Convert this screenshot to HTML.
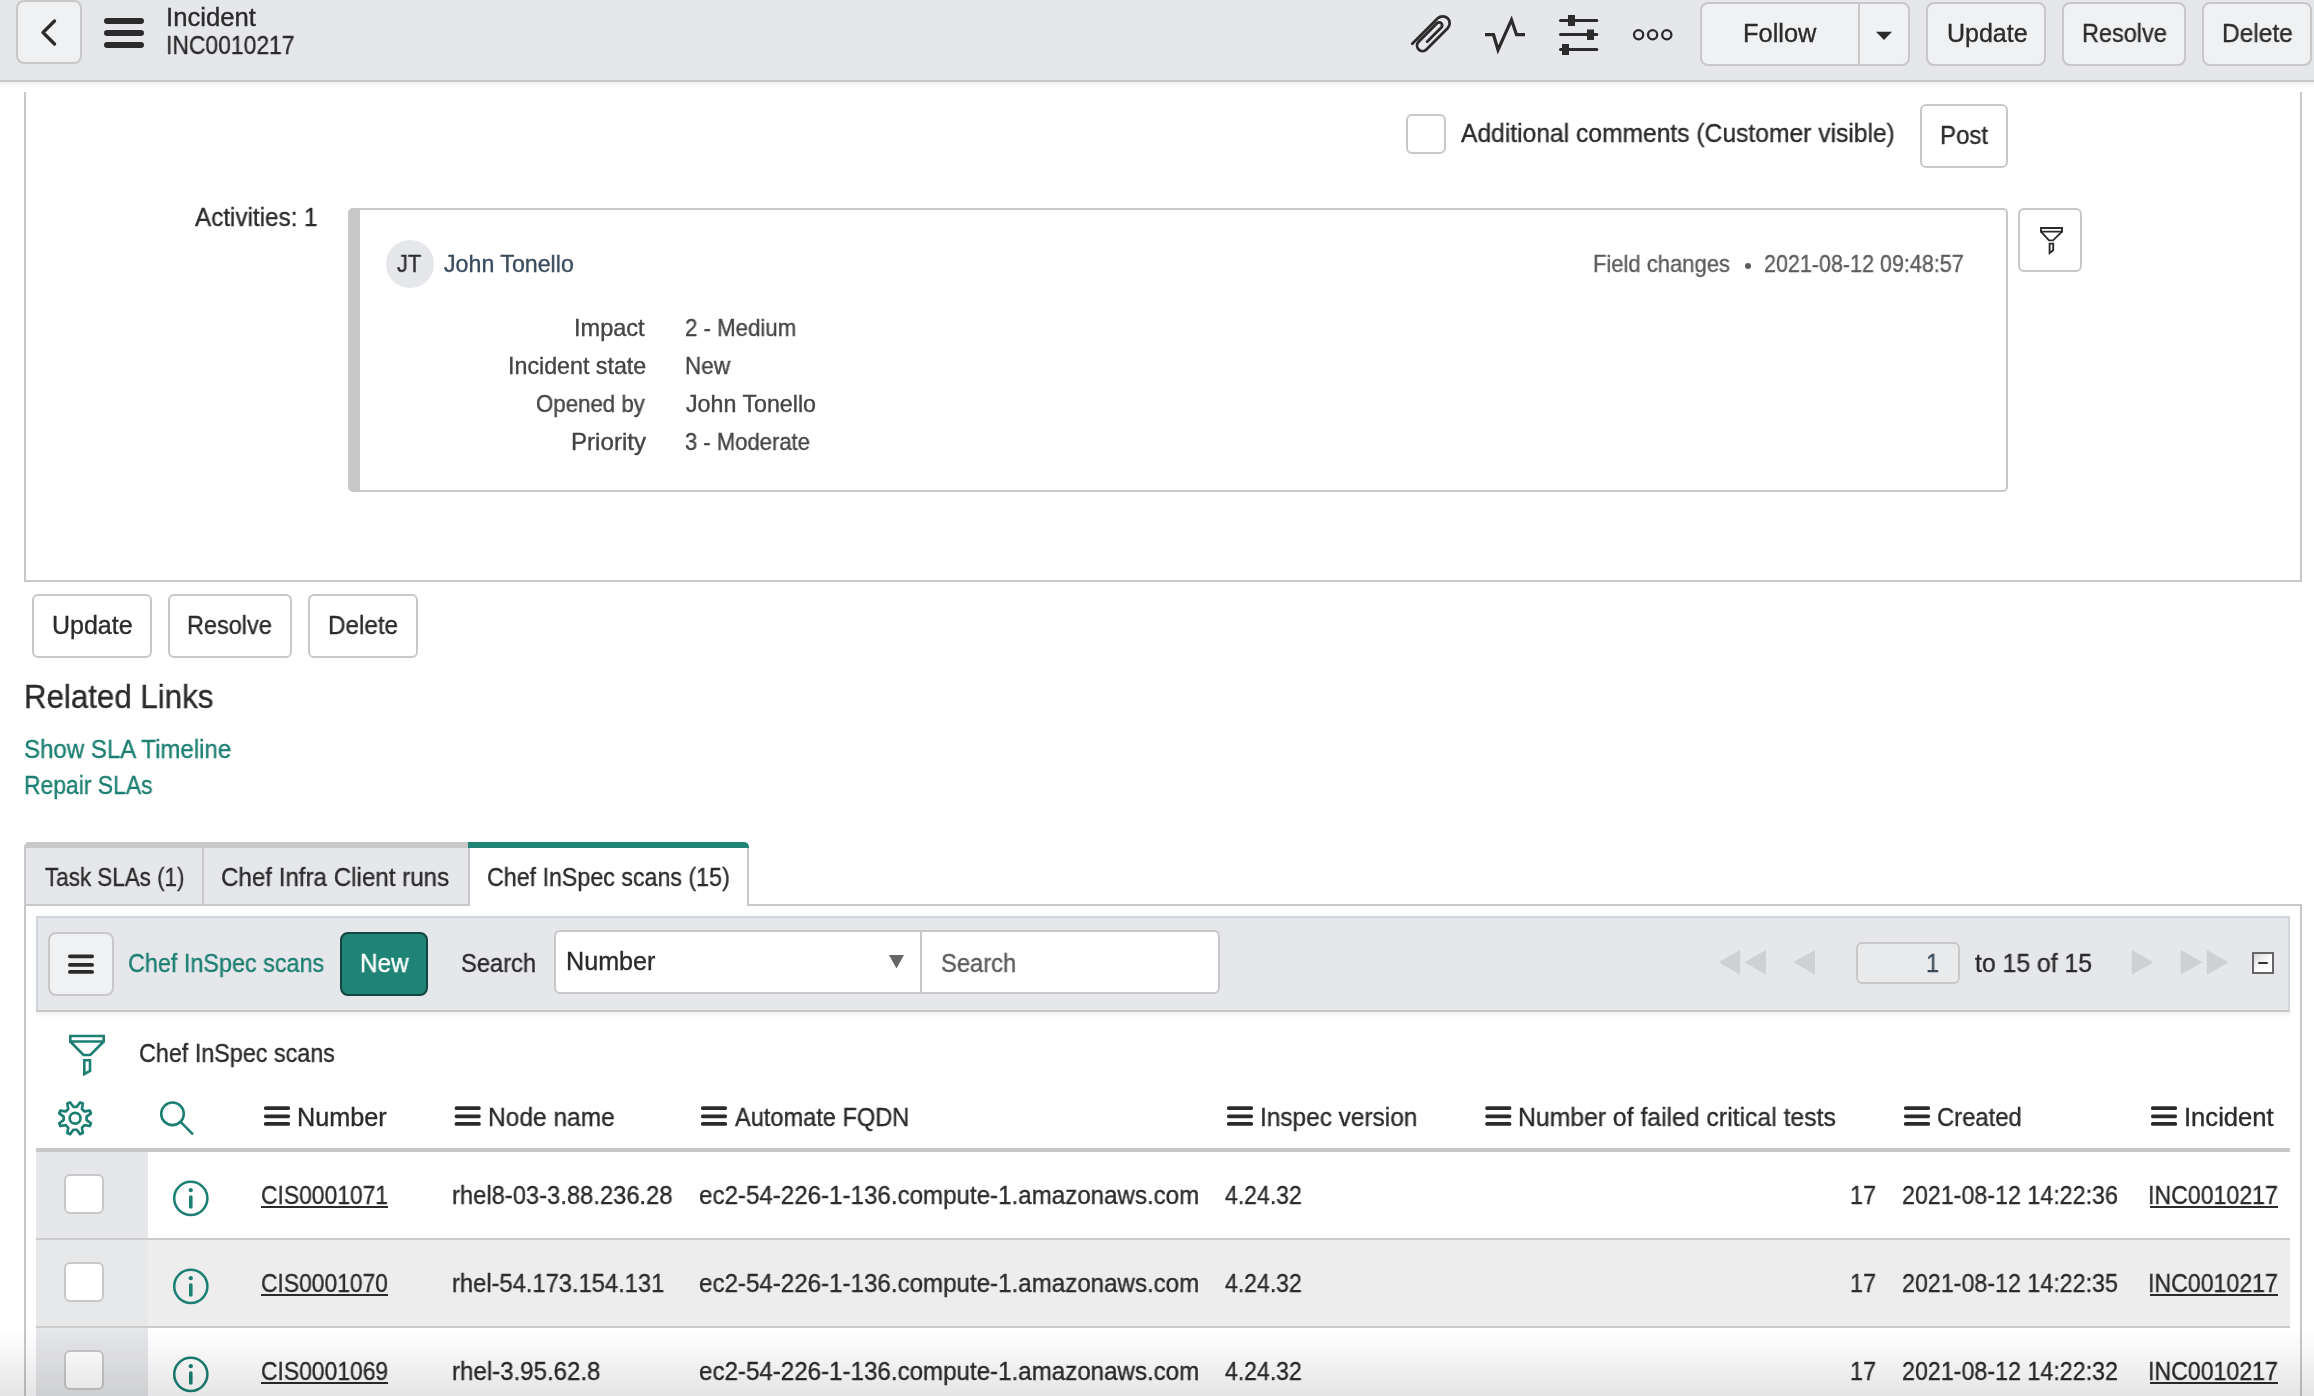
<!DOCTYPE html>
<html><head><meta charset="utf-8"><title>Incident INC0010217</title>
<style>
html,body{margin:0;padding:0;width:2314px;height:1396px;overflow:hidden;background:#fff;position:relative}
body div{position:absolute}
.t{font-family:"Liberation Sans",sans-serif;line-height:0;white-space:nowrap;transform-origin:0 0;will-change:transform;-webkit-text-stroke:0.35px currentColor}
svg{position:absolute;left:0;top:0}
</style></head><body>
<div style="left:0px;top:0px;width:2314px;height:80px;background:#e6e7ea"></div>
<div style="left:0px;top:80px;width:2314px;height:2px;background:#c8c8c8"></div>
<div style="left:0px;top:82px;width:2314px;height:7px;background:linear-gradient(rgba(0,0,0,0.06),rgba(0,0,0,0))"></div>
<div style="left:16px;top:0px;width:66px;height:64px;box-sizing:border-box;border:2px solid #c8c8c8;border-radius:8px;background:#f0f1f3"></div>
<div style="left:1700px;top:2px;width:210px;height:64px;box-sizing:border-box;border:2px solid #c8c8c8;border-radius:8px;background:#f0f1f3"></div>
<div style="left:1858px;top:4px;width:2px;height:60px;background:#c8c8c8"></div>
<div style="left:1926px;top:2px;width:120px;height:64px;box-sizing:border-box;border:2px solid #c8c8c8;border-radius:8px;background:#f0f1f3"></div>
<div style="left:2062px;top:2px;width:124px;height:64px;box-sizing:border-box;border:2px solid #c8c8c8;border-radius:8px;background:#f0f1f3"></div>
<div style="left:2202px;top:2px;width:110px;height:64px;box-sizing:border-box;border:2px solid #c8c8c8;border-radius:8px;background:#f0f1f3"></div>
<div style="left:24px;top:92px;width:2278px;height:490px;box-sizing:border-box;border:2px solid #c8c8c8;border-top:none"></div>
<div style="left:1406px;top:114px;width:40px;height:40px;box-sizing:border-box;border:2px solid #c8c8c8;border-radius:6px;background:#fff"></div>
<div style="left:1920px;top:104px;width:88px;height:64px;box-sizing:border-box;border:2px solid #c8c8c8;border-radius:6px;background:#fff"></div>
<div style="left:348px;top:208px;width:1660px;height:284px;box-sizing:border-box;border:2px solid #c8c8c8;border-left:12px solid #c8c8c8;border-radius:5px;background:#fff"></div>
<div style="left:386px;top:240px;width:48px;height:48px;border-radius:50%;background:#e6e7ea"></div>
<div style="left:1744.7px;top:262.6px;width:6px;height:6px;border-radius:50%;background:#5c5c5c"></div>
<div style="left:2018px;top:208px;width:64px;height:64px;box-sizing:border-box;border:2px solid #c8c8c8;border-radius:6px;background:#fff"></div>
<div style="left:32px;top:594px;width:120px;height:64px;box-sizing:border-box;border:2px solid #c8c8c8;border-radius:6px;background:#fff"></div>
<div style="left:168px;top:594px;width:124px;height:64px;box-sizing:border-box;border:2px solid #c8c8c8;border-radius:6px;background:#fff"></div>
<div style="left:308px;top:594px;width:110px;height:64px;box-sizing:border-box;border:2px solid #c8c8c8;border-radius:6px;background:#fff"></div>
<div style="left:24px;top:842px;width:444px;height:6px;background:#c8c8c8;border-top-left-radius:5px"></div>
<div style="left:468px;top:842px;width:281px;height:6px;background:#1f8476;border-top-right-radius:5px"></div>
<div style="left:24px;top:848px;width:444px;height:56px;background:#e6e7ea"></div>
<div style="left:24px;top:848px;width:2px;height:548px;background:#c8c8c8"></div>
<div style="left:202px;top:848px;width:2px;height:56px;background:#c8c8c8"></div>
<div style="left:468px;top:848px;width:2px;height:58px;background:#c8c8c8"></div>
<div style="left:747px;top:848px;width:2px;height:58px;background:#c8c8c8"></div>
<div style="left:24px;top:904px;width:444px;height:2px;background:#c8c8c8"></div>
<div style="left:749px;top:904px;width:1553px;height:2px;background:#c8c8c8"></div>
<div style="left:2300px;top:904px;width:2px;height:492px;background:#c8c8c8"></div>
<div style="left:36px;top:916px;width:2254px;height:96px;box-sizing:border-box;background:#e6e7ea;border:2px solid #cfd5da;border-bottom-color:#c8c8c8"></div>
<div style="left:36px;top:1012px;width:2254px;height:6px;background:linear-gradient(rgba(0,0,0,0.05),rgba(0,0,0,0))"></div>
<div style="left:48px;top:932px;width:66px;height:64px;box-sizing:border-box;border:2px solid #c8c8c8;border-radius:8px;background:#f0f1f3"></div>
<div style="left:340px;top:932px;width:88px;height:64px;box-sizing:border-box;border:2px solid #12463f;border-radius:8px;background:#1f8476"></div>
<div style="left:554px;top:930px;width:666px;height:64px;box-sizing:border-box;border:2px solid #c8c8c8;border-radius:6px;background:#fff"></div>
<div style="left:920px;top:932px;width:2px;height:60px;background:#c8c8c8"></div>
<div style="left:1856px;top:942px;width:104px;height:42px;box-sizing:border-box;border:2px solid #c8c8c8;border-radius:6px;background:#e9eaec"></div>
<div style="left:2252px;top:952px;width:22px;height:22px;box-sizing:border-box;border:2px solid #666;background:linear-gradient(135deg,#d8d8d8,#fff 60%)"></div>
<div style="left:2258px;top:961.6px;width:10px;height:2.6px;background:#333;border-radius:1px"></div>
<div style="left:36px;top:1148px;width:2254px;height:4px;background:#c8c8c8"></div>
<div style="left:36px;top:1152px;width:2254px;height:86px;background:#fff"></div>
<div style="left:36px;top:1238px;width:2254px;height:2px;background:#cbcbcb"></div>
<div style="left:36px;top:1240px;width:2254px;height:86px;background:#ededed"></div>
<div style="left:36px;top:1326px;width:2254px;height:2px;background:#cbcbcb"></div>
<div style="left:36px;top:1328px;width:2254px;height:68px;background:#fff"></div>
<div style="left:36px;top:1152px;width:112px;height:86px;background:#e6e7ea"></div>
<div style="left:36px;top:1240px;width:112px;height:86px;background:#e7e8ea"></div>
<div style="left:36px;top:1328px;width:112px;height:68px;background:#e6e7ea"></div>
<div style="left:64px;top:1174px;width:40px;height:40px;box-sizing:border-box;border:2px solid #c8c8c8;border-radius:6px;background:#fff"></div>
<div style="left:64px;top:1262px;width:40px;height:40px;box-sizing:border-box;border:2px solid #c8c8c8;border-radius:6px;background:#fff"></div>
<div style="left:64px;top:1350px;width:40px;height:40px;box-sizing:border-box;border:2px solid #c8c8c8;border-radius:6px;background:#fff"></div>
<svg width="2314" height="1396" viewBox="0 0 2314 1396" style="pointer-events:none">
<g fill="none" stroke="#2b2b2b" stroke-linecap="round" stroke-linejoin="round">
<polyline points="54.5,21 43,32.5 54.5,44" stroke-width="3.4"/>
</g>
<g fill="#2b2b2b">
<rect x="104" y="18" width="40" height="6" rx="3"/>
<rect x="104" y="30" width="40" height="6" rx="3"/>
<rect x="104" y="42" width="40" height="6" rx="3"/>
</g>
<!-- paperclip -->
<g transform="translate(1433.5,32.5) rotate(45)" fill="none" stroke="#2b2b2b" stroke-width="2.8" stroke-linecap="round">
<path d="M -7 23 V -13 A 7 7 0 0 1 7 -13 V 17 A 5.5 5.5 0 0 1 -4 17 V -9 A 3 3 0 0 1 2 -9 V 11"/>
</g>
<!-- activity -->
<polyline points="1485,34.7 1493.5,34.7 1498,49.8 1511.5,19.8 1516.5,34.7 1525,34.7" fill="none" stroke="#2b2b2b" stroke-width="3.2" stroke-linejoin="miter"/>
<!-- sliders -->
<g stroke="#2b2b2b" stroke-width="3" stroke-linecap="round">
<line x1="1560.5" y1="20.4" x2="1596.8" y2="20.4"/>
<line x1="1560.5" y1="34.6" x2="1596.8" y2="34.6"/>
<line x1="1560.5" y1="49.5" x2="1596.8" y2="49.5"/>
</g>
<g fill="#2b2b2b">
<rect x="1568" y="15" width="7" height="11"/>
<rect x="1587" y="29.5" width="7" height="10.5"/>
<rect x="1562" y="44" width="7" height="11"/>
</g>
<g fill="none" stroke="#2b2b2b" stroke-width="2.3">
<circle cx="1638.6" cy="34.7" r="4.6"/>
<circle cx="1652.6" cy="34.7" r="4.6"/>
<circle cx="1666.8" cy="34.7" r="4.6"/>
</g>
<polygon points="1876,31.7 1892,31.7 1884,40" fill="#2b2b2b"/>
<!-- activity filter funnel -->
<g fill="none" stroke="#2b2b2b" stroke-width="1.9" stroke-linejoin="miter" stroke-miterlimit="2.5">
<path d="M2041 228 H2062 V231.6 H2041 Z"/>
<path d="M2041 231.6 L2049 240.4 H2053 L2062 231.6"/>
<path d="M2049.6 243.6 H2053.2 V250.3 L2049.6 253 Z"/>
</g>
<!-- list hamburger -->
<g fill="#2b2b2b">
<rect x="68" y="954.4" width="26" height="3.8" rx="1.9"/>
<rect x="68" y="963" width="26" height="3.8" rx="1.9"/>
<rect x="68" y="970" width="26" height="3.8" rx="1.9"/>
</g>
<polygon points="889,955 904,955 896.5,968.6" fill="#666"/>
<g fill="#cfd0d3">
<polygon points="1718.7,962.3 1740.1,950 1740.1,974.8"/>
<polygon points="1744.3,962.3 1766,950 1766,974.8"/>
<polygon points="1793.3,962.3 1815,950 1815,974.8"/>
<polygon points="2153.4,962.3 2131.7,950 2131.7,974.8"/>
<polygon points="2202.4,962.3 2180.7,950 2180.7,974.8"/>
<polygon points="2228.6,962.3 2206.9,950 2206.9,974.8"/>
</g>
<!-- list funnel teal -->
<g fill="none" stroke="#1c7f72" stroke-width="2.6" stroke-linejoin="miter" stroke-miterlimit="2.5">
<path d="M70.3 1036 H103.7 V1041.5 H70.3 Z"/>
<path d="M70.3 1041.5 L83.5 1055 H90.3 L103.7 1041.5"/>
<path d="M84.3 1060.3 H90 V1071 L84.3 1074 Z"/>
</g>
<!-- gear -->
<g fill="none" stroke="#1c7f72" stroke-width="2.7" stroke-linejoin="round">
<path d="M76.85 1106.83 L80.04 1102.45 L82.82 1103.60 L81.97 1108.95 L84.45 1111.43 L89.80 1110.58 L90.95 1113.36 L86.57 1116.55 L86.57 1120.05 L90.95 1123.24 L89.80 1126.02 L84.45 1125.17 L81.97 1127.65 L82.82 1133.00 L80.04 1134.15 L76.85 1129.77 L73.35 1129.77 L70.16 1134.15 L67.38 1133.00 L68.23 1127.65 L65.75 1125.17 L60.40 1126.02 L59.25 1123.24 L63.63 1120.05 L63.63 1116.55 L59.25 1113.36 L60.40 1110.58 L65.75 1111.43 L68.23 1108.95 L67.38 1103.60 L70.16 1102.45 L73.35 1106.83 Z"/>
<circle cx="75.1" cy="1118.3" r="5.4"/>
</g>
<!-- magnifier -->
<g fill="none" stroke="#1c7f72" stroke-width="2.6">
<circle cx="172.5" cy="1113.8" r="11.3"/>
<line x1="180.8" y1="1122.1" x2="193" y2="1134.3"/>
</g>
<g fill="#2b2b2b">
<rect x="264" y="1106.2" width="26" height="3.8" rx="1.6"/><rect x="264" y="1114.4" width="26" height="3.8" rx="1.6"/><rect x="264" y="1122" width="26" height="3.8" rx="1.6"/><rect x="454.7" y="1106.2" width="26" height="3.8" rx="1.6"/><rect x="454.7" y="1114.4" width="26" height="3.8" rx="1.6"/><rect x="454.7" y="1122" width="26" height="3.8" rx="1.6"/><rect x="701" y="1106.2" width="26" height="3.8" rx="1.6"/><rect x="701" y="1114.4" width="26" height="3.8" rx="1.6"/><rect x="701" y="1122" width="26" height="3.8" rx="1.6"/><rect x="1227" y="1106.2" width="26" height="3.8" rx="1.6"/><rect x="1227" y="1114.4" width="26" height="3.8" rx="1.6"/><rect x="1227" y="1122" width="26" height="3.8" rx="1.6"/><rect x="1485.3" y="1106.2" width="26" height="3.8" rx="1.6"/><rect x="1485.3" y="1114.4" width="26" height="3.8" rx="1.6"/><rect x="1485.3" y="1122" width="26" height="3.8" rx="1.6"/><rect x="1904" y="1106.2" width="26" height="3.8" rx="1.6"/><rect x="1904" y="1114.4" width="26" height="3.8" rx="1.6"/><rect x="1904" y="1122" width="26" height="3.8" rx="1.6"/><rect x="2151" y="1106.2" width="26" height="3.8" rx="1.6"/><rect x="2151" y="1114.4" width="26" height="3.8" rx="1.6"/><rect x="2151" y="1122" width="26" height="3.8" rx="1.6"/>
</g>
<g fill="none" stroke="#1c7f72" stroke-width="2.5">
<circle cx="190.8" cy="1198.3" r="16.6"/>
<circle cx="190.8" cy="1286.3" r="16.6"/>
<circle cx="190.8" cy="1374.3" r="16.6"/>
</g>
<g fill="#1c7f72">
<circle cx="190.8" cy="1190.2" r="2.1"/><rect x="189" y="1195.3" width="3.6" height="13.5" rx="1.8"/>
<circle cx="190.8" cy="1278.2" r="2.1"/><rect x="189" y="1283.3" width="3.6" height="13.5" rx="1.8"/>
<circle cx="190.8" cy="1366.2" r="2.1"/><rect x="189" y="1371.3" width="3.6" height="13.5" rx="1.8"/>
</g>
</svg>

<div class="t" style="left:165.57px;top:17px;font-size:25px;color:#2b2b2b;transform:scaleX(1.0274)">Incident</div>
<div class="t" style="left:166.34px;top:45px;font-size:25px;color:#2b2b2b;transform:scaleX(0.9156)">INC0010217</div>
<div class="t" style="left:1743.16px;top:33.2px;font-size:25px;color:#2b2b2b;transform:scaleX(1.0156)">Follow</div>
<div class="t" style="left:1946.60px;top:33px;font-size:25px;color:#2b2b2b;transform:scaleX(0.9974)">Update</div>
<div class="t" style="left:2082.28px;top:33px;font-size:25px;color:#2b2b2b;transform:scaleX(0.9384)">Resolve</div>
<div class="t" style="left:2221.82px;top:33px;font-size:25px;color:#2b2b2b;transform:scaleX(0.9803)">Delete</div>
<div class="t" style="left:1461.00px;top:133px;font-size:25px;color:#2b2b2b;transform:scaleX(0.9849)">Additional comments (Customer visible)</div>
<div class="t" style="left:1939.90px;top:135px;font-size:25px;color:#2b2b2b;transform:scaleX(0.9616)">Post</div>
<div class="t" style="left:194.60px;top:217px;font-size:25px;color:#2b2b2b;transform:scaleX(0.9689)">Activities: 1</div>
<div class="t" style="left:397.35px;top:264px;font-size:23.2px;color:#2b2b2b;transform:scaleX(0.9425)">JT</div>
<div class="t" style="left:444.16px;top:264.3px;font-size:23.2px;color:#3a4b5d;transform:scaleX(0.9994)">John Tonello</div>
<div class="t" style="left:1593.13px;top:264px;font-size:23.2px;color:#5c5c5c;transform:scaleX(0.9486)">Field changes</div>
<div class="t" style="left:1764.32px;top:264px;font-size:23.2px;color:#5c5c5c;transform:scaleX(0.9274)">2021-08-12 09:48:57</div>
<div class="t" style="left:574.35px;top:328.1px;font-size:23.2px;color:#444444;transform:scaleX(1.0153)">Impact</div>
<div class="t" style="left:507.97px;top:366px;font-size:23.2px;color:#444444;transform:scaleX(1.0024)">Incident state</div>
<div class="t" style="left:536.32px;top:404px;font-size:23.2px;color:#444444;transform:scaleX(0.9598)">Opened by</div>
<div class="t" style="left:570.66px;top:442px;font-size:23.2px;color:#444444;transform:scaleX(1.0402)">Priority</div>
<div class="t" style="left:684.83px;top:328.1px;font-size:23.2px;color:#444444;transform:scaleX(0.9586)">2 - Medium</div>
<div class="t" style="left:684.73px;top:366px;font-size:23.2px;color:#444444;transform:scaleX(0.9702)">New</div>
<div class="t" style="left:686.04px;top:404px;font-size:23.2px;color:#444444;transform:scaleX(1.0015)">John Tonello</div>
<div class="t" style="left:684.77px;top:442px;font-size:23.2px;color:#444444;transform:scaleX(0.9509)">3 - Moderate</div>
<div class="t" style="left:51.98px;top:625.2px;font-size:25px;color:#2b2b2b;transform:scaleX(0.9967)">Update</div>
<div class="t" style="left:187.28px;top:625px;font-size:25px;color:#2b2b2b;transform:scaleX(0.9384)">Resolve</div>
<div class="t" style="left:327.54px;top:625px;font-size:25px;color:#2b2b2b;transform:scaleX(0.9698)">Delete</div>
<div class="t" style="left:23.99px;top:697px;font-size:32.5px;color:#2b2b2b;transform:scaleX(0.9616)">Related Links</div>
<div class="t" style="left:24.09px;top:749px;font-size:25px;color:#1c7f72;transform:scaleX(0.9621)">Show SLA Timeline</div>
<div class="t" style="left:23.84px;top:785px;font-size:25px;color:#1c7f72;transform:scaleX(0.9163)">Repair SLAs</div>
<div class="t" style="left:44.59px;top:877px;font-size:25px;color:#2b2b2b;transform:scaleX(0.8968)">Task SLAs (1)</div>
<div class="t" style="left:221.44px;top:877px;font-size:25px;color:#2b2b2b;transform:scaleX(0.9657)">Chef Infra Client runs</div>
<div class="t" style="left:486.67px;top:877px;font-size:25px;color:#2b2b2b;transform:scaleX(0.9293)">Chef InSpec scans (15)</div>
<div class="t" style="left:127.57px;top:963px;font-size:25px;color:#1c7f72;transform:scaleX(0.9351)">Chef InSpec scans</div>
<div class="t" style="left:359.55px;top:963px;font-size:25px;color:#ffffff;transform:scaleX(0.9715)">New</div>
<div class="t" style="left:461.48px;top:963px;font-size:25px;color:#2b2b2b;transform:scaleX(0.9478)">Search</div>
<div class="t" style="left:566.23px;top:961.3px;font-size:25px;color:#2b2b2b;transform:scaleX(1.0057)">Number</div>
<div class="t" style="left:940.78px;top:963.2px;font-size:25px;color:#5c5c5c;transform:scaleX(0.9493)">Search</div>
<div class="t" style="left:1925.80px;top:962.8px;font-size:25px;color:#3a4b5d;transform:scaleX(0.9469)">1</div>
<div class="t" style="left:1975.21px;top:962.8px;font-size:25px;color:#2b2b2b;transform:scaleX(0.9908)">to 15 of 15</div>
<div class="t" style="left:139.07px;top:1053.2px;font-size:25px;color:#2b2b2b;transform:scaleX(0.9336)">Chef InSpec scans</div>
<div class="t" style="left:297.02px;top:1117px;font-size:25px;color:#2b2b2b;transform:scaleX(1.0092)">Number</div>
<div class="t" style="left:487.87px;top:1117px;font-size:25px;color:#2b2b2b;transform:scaleX(0.9812)">Node name</div>
<div class="t" style="left:735.32px;top:1117px;font-size:25px;color:#2b2b2b;transform:scaleX(0.9430)">Automate FQDN</div>
<div class="t" style="left:1259.88px;top:1117px;font-size:25px;color:#2b2b2b;transform:scaleX(0.9762)">Inspec version</div>
<div class="t" style="left:1518.13px;top:1117px;font-size:25px;color:#2b2b2b;transform:scaleX(0.9903)">Number of failed critical tests</div>
<div class="t" style="left:1937.33px;top:1117px;font-size:25px;color:#2b2b2b;transform:scaleX(0.9520)">Created</div>
<div class="t" style="left:2184.42px;top:1117px;font-size:25px;color:#2b2b2b;transform:scaleX(1.0244)">Incident</div>
<div class="t" style="left:260.94px;top:1195px;font-size:25px;color:#2b2b2b;transform:scaleX(0.9142)">CIS0001071</div>
<div style="left:261.4px;top:1206px;width:126.5px;height:2px;background:#2b2b2b"></div>
<div class="t" style="left:452.16px;top:1195px;font-size:25px;color:#2b2b2b;transform:scaleX(0.9501)">rhel8-03-3.88.236.28</div>
<div class="t" style="left:698.63px;top:1195px;font-size:25px;color:#2b2b2b;transform:scaleX(0.9651)">ec2-54-226-1-136.compute-1.amazonaws.com</div>
<div class="t" style="left:1225.34px;top:1195px;font-size:25px;color:#2b2b2b;transform:scaleX(0.9204)">4.24.32</div>
<div class="t" style="left:1849.66px;top:1195px;font-size:25px;color:#2b2b2b;transform:scaleX(0.9355)">17</div>
<div class="t" style="left:1901.75px;top:1195px;font-size:25px;color:#2b2b2b;transform:scaleX(0.9300)">2021-08-12 14:22:36</div>
<div class="t" style="left:2148.43px;top:1195px;font-size:25px;color:#2b2b2b;transform:scaleX(0.9250)">INC0010217</div>
<div style="left:2149.5px;top:1206px;width:128.4px;height:2px;background:#2b2b2b"></div>
<div class="t" style="left:260.94px;top:1283px;font-size:25px;color:#2b2b2b;transform:scaleX(0.9134)">CIS0001070</div>
<div style="left:261.4px;top:1294px;width:126.5px;height:2px;background:#2b2b2b"></div>
<div class="t" style="left:452.15px;top:1283px;font-size:25px;color:#2b2b2b;transform:scaleX(0.9485)">rhel-54.173.154.131</div>
<div class="t" style="left:698.63px;top:1283px;font-size:25px;color:#2b2b2b;transform:scaleX(0.9651)">ec2-54-226-1-136.compute-1.amazonaws.com</div>
<div class="t" style="left:1225.34px;top:1283px;font-size:25px;color:#2b2b2b;transform:scaleX(0.9204)">4.24.32</div>
<div class="t" style="left:1849.66px;top:1283px;font-size:25px;color:#2b2b2b;transform:scaleX(0.9355)">17</div>
<div class="t" style="left:1901.75px;top:1283px;font-size:25px;color:#2b2b2b;transform:scaleX(0.9300)">2021-08-12 14:22:35</div>
<div class="t" style="left:2148.43px;top:1283px;font-size:25px;color:#2b2b2b;transform:scaleX(0.9250)">INC0010217</div>
<div style="left:2149.5px;top:1294px;width:128.4px;height:2px;background:#2b2b2b"></div>
<div class="t" style="left:260.93px;top:1371px;font-size:25px;color:#2b2b2b;transform:scaleX(0.9147)">CIS0001069</div>
<div style="left:261.4px;top:1382px;width:126.5px;height:2px;background:#2b2b2b"></div>
<div class="t" style="left:452.05px;top:1371px;font-size:25px;color:#2b2b2b;transform:scaleX(0.9623)">rhel-3.95.62.8</div>
<div class="t" style="left:698.63px;top:1371px;font-size:25px;color:#2b2b2b;transform:scaleX(0.9651)">ec2-54-226-1-136.compute-1.amazonaws.com</div>
<div class="t" style="left:1225.34px;top:1371px;font-size:25px;color:#2b2b2b;transform:scaleX(0.9204)">4.24.32</div>
<div class="t" style="left:1849.66px;top:1371px;font-size:25px;color:#2b2b2b;transform:scaleX(0.9355)">17</div>
<div class="t" style="left:1901.75px;top:1371px;font-size:25px;color:#2b2b2b;transform:scaleX(0.9303)">2021-08-12 14:22:32</div>
<div class="t" style="left:2148.43px;top:1371px;font-size:25px;color:#2b2b2b;transform:scaleX(0.9250)">INC0010217</div>
<div style="left:2149.5px;top:1382px;width:128.4px;height:2px;background:#2b2b2b"></div>
<div style="left:0;top:1330px;width:2314px;height:66px;background:linear-gradient(rgba(0,0,0,0),rgba(0,0,0,0.1))"></div>
</body></html>
